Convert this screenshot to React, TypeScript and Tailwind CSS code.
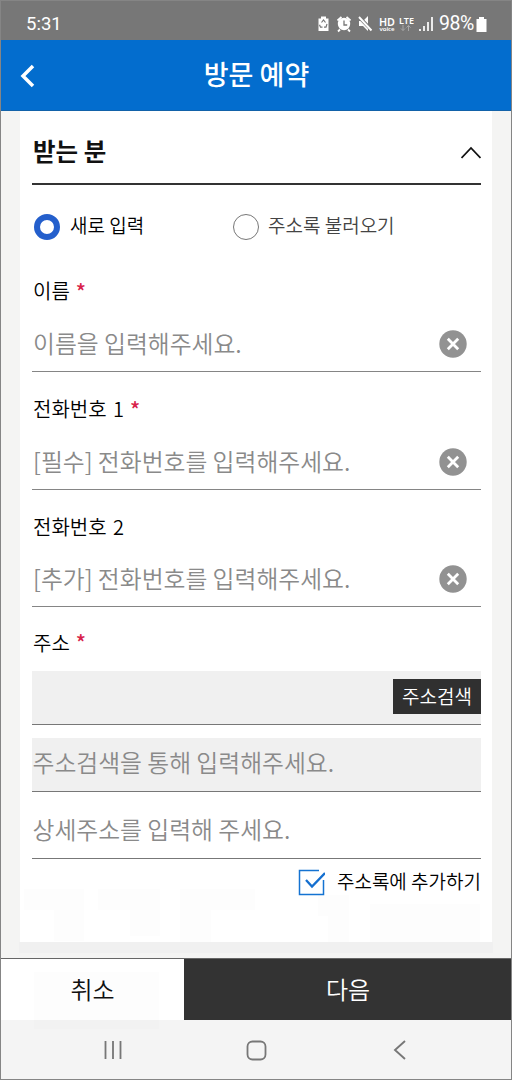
import React from "react";

type FieldProps = {
  label: string;
  placeholder: string;
  required?: boolean;
  className: string;
};

function Required() {
  return <span className="ml-[6px] text-[21px] font-medium text-[#d8224a]">*</span>;
}

function ClearIcon() {
  return (
    <svg width="28" height="28" viewBox="0 0 28 28" fill="none">
      <circle cx="14" cy="14" r="13.7" fill="#929292" />
      <path d="M8.800 8.800l10.400 10.400M19.200 8.800L8.800 19.200" stroke="#fff" strokeWidth="2.800" />
    </svg>
  );
}

function Field({ label, placeholder, required, className }: FieldProps) {
  return (
    <div className={`flex flex-col border-b border-[#858585] ${className}`}>
      <div className="flex h-[38px] items-center pt-[36px] pl-px text-[20px] leading-none text-[#000]">
        <span className="font-[350] [word-spacing:2px]">{label}</span>
        {required && <Required />}
      </div>
      <div className="mt-auto flex h-[54px] items-center justify-between pr-[14px]">
        <span className="pb-[3px] pl-px text-[23.8px] leading-none font-[350] text-[#8a8a8a]">{placeholder}</span>
        <ClearIcon />
      </div>
    </div>
  );
}

function StatusIcons() {
  return (
    <svg width="118" height="24" viewBox="316 12 118 24" fill="none">
      <path d="M321 16.500h5v2h2.500v12.500h-10V18.500h2.500z" fill="#fff" />
      <path d="M321.500 22.500l2-2.500 2 2.500M327 24l-1 3.200h-2M322.500 27.200h-2l-1-2.500" stroke="#777" strokeWidth="1.200" />
      <circle cx="344" cy="24" r="6.200" fill="#fff" />
      <path d="M337.500 20.500l4-3.500M346.500 17l4 3.500M340 29.500l-2 2M348 29.500l2 2" stroke="#fff" strokeWidth="1.800" />
      <path d="M344 20.500V25h3.200" stroke="#777" strokeWidth="1.300" />
      <path d="M359 21h4l5-5v15l-5-5h-4z" fill="#fff" />
      <path d="M359.500 17.500l12.500 13" stroke="#777" strokeWidth="3.500" />
      <path d="M359 17l12.500 13.500" stroke="#fff" strokeWidth="1.900" />
      <g fill="#fff" fontFamily="Noto Sans" fontWeight="600">
        <text x="379" y="25.500" fontSize="11.500" textLength="16" lengthAdjust="spacingAndGlyphs">HD</text>
        <text x="379.500" y="30.500" fontSize="6" textLength="15">voice</text>
        <text x="399" y="23.500" fontSize="9" textLength="15">LTE</text>
      </g>
      <path d="M403 25v5.500m-2-2l2 2 2-2M408.500 31v-5.500m-2 2l2-2 2 2" stroke="#a8a8a8" strokeWidth="1" />
      <path d="M420 29v2M424 26v5M428 22v9M432 17v14" stroke="#fff" strokeWidth="1.700" />
    </svg>
  );
}

export default function App() {
  return (
    <div className="relative flex h-[1080px] w-[512px] flex-col overflow-hidden bg-[#f4f4f3] font-['Noto_Sans_CJK_KR',sans-serif] text-[#111]">
      <header className="flex h-[40px] shrink-0 items-center border-t border-[#8b8b8b] bg-[#777] pr-[25px] pl-[26px] pt-[7px] text-white">
        <span className="font-['Roboto',sans-serif] text-[18.5px] leading-none">5:31</span>
        <div className="ml-auto flex items-center">
          <StatusIcons />
          <span className="ml-[5px] font-['Roboto',sans-serif] text-[19.5px] leading-none tracking-[-0.4px]">98%</span>
          <svg className="ml-[2px]" width="11" height="17" viewBox="0 0 11 17">
            <path d="M3 1h5v2h2.500v13H.5V3H3z" fill="#fff" />
          </svg>
        </div>
      </header>

      <div className="grid h-[71px] shrink-0 grid-cols-[60px_1fr_60px] items-center border-x border-b border-[#1262a9] bg-[#036dce]">
        <svg className="ml-[19px] mt-[2px]" width="16" height="24" viewBox="0 0 16 24" fill="none">
          <path d="M13 2L3 12l10 10" stroke="#fff" strokeWidth="3.500" />
        </svg>
        <h1 className="pb-[3px] pl-px text-center text-[27px] leading-none font-medium text-white">방문 예약</h1>
      </div>

      <main className="h-[847px] shrink-0 px-[20px]">
        <section className="flex h-[831px] flex-col bg-white pr-[11px] pl-[12px]">
          <div className="flex h-[74px] items-center justify-between border-b-2 border-[#333] pt-[10px]">
            <h2 className="pb-[2px] pl-px text-[24.5px] leading-none font-bold">받는 분</h2>
            <svg width="20" height="13" viewBox="0 0 20 13" fill="none">
              <path d="M.5 12L10 2l9.500 10" stroke="#111" strokeWidth="1.800" />
            </svg>
          </div>

          <div className="flex h-[69px] items-center pt-[15px] text-[19px] leading-none">
            <div className="flex w-[201px] items-center pl-[2px]">
              <span className="size-[26px] rounded-full border-[6.500px] border-[#245fcc]" />
              <span className="ml-[10px] pb-[6px] font-[350] text-black">새로 입력</span>
            </div>
            <div className="flex items-center">
              <span className="size-[26px] rounded-full border border-[#777]" />
              <span className="ml-[9px] pb-[6px] font-[350] text-[#444]">주소록 불러오기</span>
            </div>
          </div>

          <Field className="h-[118px] pb-0" label="이름" placeholder="이름을 입력해주세요." required />
          <Field className="h-[118px]" label="전화번호 1" placeholder="[필수] 전화번호를 입력해주세요." required />
          <Field className="h-[117px]" label="전화번호 2" placeholder="[추가] 전화번호를 입력해주세요." />

          <div className="flex h-[64px] items-center pt-[7px] pl-px text-[20px] leading-none text-black">
            <span className="font-[350]">주소</span>
            <Required />
          </div>
          <div className="flex h-[54px] shrink-0 items-center justify-end border-b border-[#777] bg-[#f0f0f0] pb-[2px]">
            <button className="h-[35px] w-[88px] bg-[#303030] pb-[3px] text-[19px] leading-none font-[350] text-white">주소검색</button>
          </div>
          <div className="mt-[13px] flex h-[54px] shrink-0 items-center border-b border-[#777] bg-[#f0f0f0] pb-[5px] pl-[0.5px] text-[23.8px] leading-none font-[350] text-[#8a8a8a]">
            주소검색을 통해 입력해주세요.
          </div>
          <div className="mt-[13px] flex h-[54px] shrink-0 items-center border-b border-[#777] pb-[5px] pl-[0.5px] text-[23.8px] leading-none font-[350] text-[#8a8a8a]">
            상세주소를 입력해 주세요.
          </div>
          <div className="mt-[7px] flex h-[32px] items-center justify-end text-[19px] leading-none">
            <svg width="28" height="28" viewBox="0 0 28 28" fill="none">
              <path d="M22 2.500H2.500v24h24V12" stroke="#1473d2" strokeWidth="1.500" />
              <path d="M9 12l6 6.500L28 5" stroke="#146fd0" strokeWidth="2.300" />
            </svg>
            <span className="ml-[12px] pb-[4px] font-[350] text-black">주소록에 추가하기</span>
          </div>
        </section>
        <div className="mx-[-1px] h-[11px] bg-[#f0f0f0]" />
      </main>

      <footer className="flex h-[62px] shrink-0 border-t border-[#666] text-[24px] leading-none font-[350]">
        <button className="w-[184px] bg-white pb-[2px] pl-px">취소</button>
        <button className="flex-1 bg-[#333] pb-[2px] text-white">다음</button>
      </footer>

      <nav className="grid h-[60px] grid-cols-[226px_60px_226px] items-center bg-[#f4f4f4]">
        <svg className="ml-[103px]" width="20" height="20" viewBox="0 0 20 20" fill="none" stroke="#777" strokeWidth="1.800">
          <path d="M2.500 1v18M10 1v18M17.500 1v18" />
        </svg>
        <svg className="ml-[20px]" width="21" height="21" viewBox="0 0 21 21" fill="none" stroke="#777" strokeWidth="1.800">
          <rect x="1.500" y="1.500" width="18" height="18" rx="5" />
        </svg>
        <svg className="ml-[107px]" width="14" height="20" viewBox="0 0 14 20" fill="none" stroke="#777" strokeWidth="1.900">
          <path d="M12 1L2 10l10 9" />
        </svg>
      </nav>

      <svg className="pointer-events-none absolute top-[880px] left-0" width="512" height="180" viewBox="0 880 512 180" fill="none">
        <path d="M24 889h60v52H54v-31H24zM98 889h62v47h-30v-26H98zM180 889h75v21h-44v32h-31zM318 895h31v47h-21v-26h-10zM370 904h110v38H370zM34 972h125v57H34z" fill="#000" opacity=".008" />
      </svg>
      <div className="pointer-events-none absolute inset-0 border border-[#858585]" />
    </div>
  );
}
